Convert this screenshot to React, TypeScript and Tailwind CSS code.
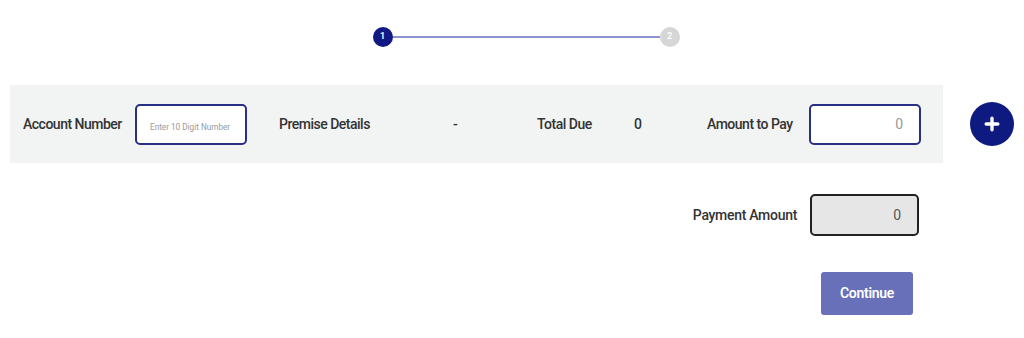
import { Plus } from "lucide-react";

function Stepper() {
  return (
    <div className="flex items-center justify-center pt-[27px] pl-[28px]">
      <div className="flex items-center">
        <div className="w-[20px] h-[20px] rounded-full bg-[#111a84] text-white text-[9px] font-semibold flex items-center justify-center">
          1
        </div>
        <div className="w-[267px] h-[1.5px] bg-[#8e92d2]" />
        <div className="w-[20px] h-[20px] rounded-full bg-[#d6d6d6] text-white text-[9px] font-semibold flex items-center justify-center">
          2
        </div>
      </div>
    </div>
  );
}

export default function App() {
  return (
    <div
      className="w-[1024px] h-[338px] bg-white text-[#333] text-[14px] font-medium"
      style={{ fontFamily: "Roboto, 'Liberation Sans', sans-serif" }}
    >
      <Stepper />

      <div className="flex items-center mt-[38px]">
        <div className="ml-[10px] w-[933px] h-[78px] bg-[#f2f3f3] flex items-center pl-[13px]">
          <span className="w-[112px] tracking-[-0.5px]">Account Number</span>
          <input
            className="w-[112px] h-[41px] bg-white border-2 border-[#2a2f86] rounded-[5px] pl-[13px] pr-[4px] pt-[5px] text-[8.2px] font-normal text-[#333] placeholder:text-[#9a9a9a] outline-none"
            placeholder="Enter 10 Digit Number"
          />
          <span className="ml-[32px] w-[174px] tracking-[-0.5px]">Premise Details</span>
          <span className="w-[84px]">-</span>
          <span className="w-[97px] tracking-[-0.5px]">Total Due</span>
          <span className="w-[73px]">0</span>
          <span className="w-[102px] tracking-[-0.5px]">Amount to Pay</span>
          <input
            className="w-[112px] h-[41px] bg-white border-2 border-[#2a2f86] rounded-[5px] px-[16px] text-right text-[14px] font-normal text-[#999] outline-none"
            defaultValue="0"
          />
        </div>
        <button className="ml-[27px] w-[44px] h-[44px] rounded-full bg-[#0f1a80] flex items-center justify-center">
          <Plus className="w-[20px] h-[20px] text-white" strokeWidth={4} />
        </button>
      </div>

      <div className="flex items-center justify-end pr-[105px] mt-[31px] gap-[13px]">
        <span className="tracking-[-0.3px]">Payment Amount</span>
        <input
          className="w-[109px] h-[42px] bg-[#e6e6e6] border-2 border-[#222] rounded-[5px] px-[16px] text-right text-[14px] font-normal text-[#555] outline-none"
          defaultValue="0"
          readOnly
        />
      </div>

      <div className="flex justify-end pr-[111px] mt-[36px]">
        <button className="w-[92px] h-[43px] rounded-[3px] bg-[#6770b8] text-white text-[14px] font-semibold tracking-[-0.3px]">
          Continue
        </button>
      </div>
    </div>
  );
}
